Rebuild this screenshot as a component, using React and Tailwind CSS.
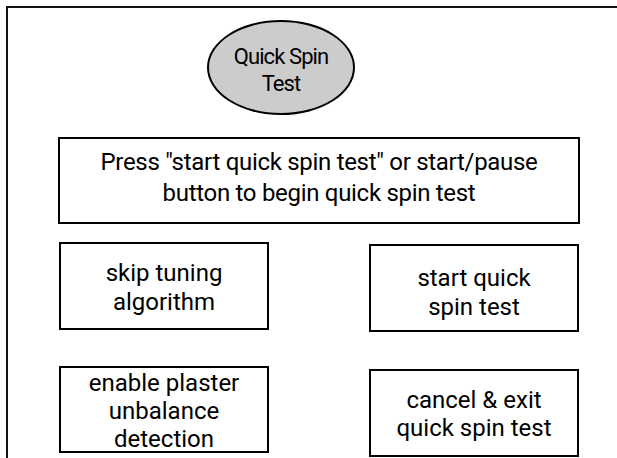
export default function App() {
    const font = { fontFamily: 'Roboto, "Liberation Sans", sans-serif' };
    return (
        <div className="h-[458px] w-full overflow-hidden bg-white text-black" style={font}>
            <div className="ml-[6px] mt-[6px] h-[600px] w-[660px] border-l-2 border-t-2 border-l-[#111111] border-t-[#111111]">
                <div className="ml-[199px] mt-[12px] flex h-[95px] w-[148px] flex-col items-center justify-center rounded-[50%] border-2 border-black bg-[#cccccc] pt-[4px] text-[22px] leading-[27px] tracking-[-0.9px]">
                    <span>Quick Spin</span>
                    <span>Test</span>
                </div>
                <div className="ml-[50px] mt-[22px] flex h-[87px] w-[522px] flex-col items-center justify-center border-2 border-black pb-[6px] text-[24px] leading-[31px] tracking-[-0.3px]">
                    <span>Press "start quick spin test" or start/pause</span>
                    <span>button to begin quick spin test</span>
                </div>
                <div className="ml-[51px] mt-[18px] grid w-[520px] grid-cols-[210px_210px] justify-between gap-y-[34px] text-[24px] leading-[29px]">
                    <div className="flex h-[88px] flex-col items-center justify-center border-2 border-black pt-[3px]">
                        <span>skip tuning</span>
                        <span>algorithm</span>
                    </div>
                    <div className="mt-[2px] flex h-[88px] flex-col items-center justify-center border-2 border-black pt-[10px]">
                        <span>start quick</span>
                        <span>spin test</span>
                    </div>
                    <div className="flex h-[87px] flex-col items-center justify-center border-2 border-black pt-[3px] leading-[28px]">
                        <span>enable plaster</span>
                        <span>unbalance</span>
                        <span>detection</span>
                    </div>
                    <div className="mt-[3px] flex h-[88px] flex-col items-center justify-center border-2 border-black pt-[2px] leading-[28px]">
                        <span>cancel &amp; exit</span>
                        <span>quick spin test</span>
                    </div>
                </div>
            </div>
        </div>
    );
}
